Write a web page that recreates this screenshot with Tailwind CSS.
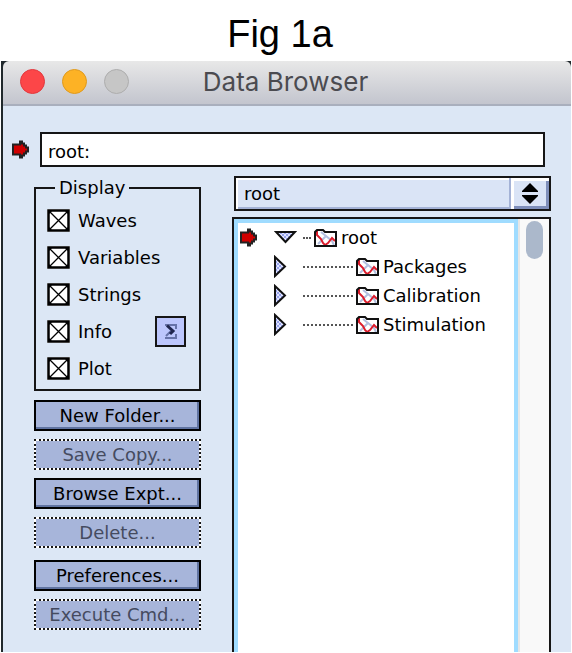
<!DOCTYPE html>
<html lang="en">
<head>
<meta charset="utf-8">
<meta name="viewport" content="width=device-width, initial-scale=1">
<title>Data Browser</title>
<script src="https://cdn.jsdelivr.net/npm/@tailwindcss/browser@4"></script>
</head>
<body class="flex min-h-screen flex-col bg-white pb-px text-black">
<!-- shared symbols -->
<svg class="absolute size-0" aria-hidden="true">
  <defs>
    <pattern id="check" width="4" height="4" patternUnits="userSpaceOnUse">
      <rect width="4" height="4" fill="#dfe4ff"/><rect width="2" height="2" fill="#98a4ee"/><rect x="2" y="2" width="2" height="2" fill="#98a4ee"/>
    </pattern>
    <symbol id="arrow" viewBox="0 0 18 19">
      <path d="M1 4.500h7V1.500h2v2h2v2h2v2h2v4h-2v2h-2v2h-2v2H8v-3H1z" fill="#cf0000" stroke="#222" stroke-width="2"/>
    </symbol>
    <symbol id="folder" viewBox="0 0 24 20">
      <path d="M2 18V4l2-2h6l2 2h11v14z" fill="#fff"/>
      <path d="M8 4l5 4-5 5M13 8l6 5 2 4M9 12l-4 4" fill="none" stroke="#b3bfe0" stroke-width="2"/>
      <path d="M4 3v4l4 4 2 4 2 2 3-2 4-5 3 3" fill="none" stroke="#dc1c2c" stroke-width="2"/>
      <path d="M2 18V4l2-2h6l2 2h11v14z" fill="none" stroke="#111" stroke-width="2"/>
    </symbol>
    <symbol id="cross" viewBox="0 0 23 23">
      <path d="M1.500 1.500h20v20h-20z" fill="none" stroke="#000" stroke-width="2.500"/>
      <path d="M3 3l17 17M20 3L3 20" stroke="#000" stroke-width="1.300"/>
      <path d="M2 2h3L2 5zM21 2v3l-3-3zM2 21v-3l3 3zM21 21h-3l3-3z"/>
    </symbol>
  </defs>
</svg>

<h1 class="h-[61px] pt-3 pr-3 text-center font-['Liberation_Sans',sans-serif] text-[38px] leading-[44px]">Fig 1a</h1>

<main class="mr-px ml-px flex flex-1 flex-col border-l-2 border-[#20282c] bg-[#20282c] font-['DejaVu_Sans',sans-serif] text-lg leading-6">
  <header class="flex h-[45px] items-center rounded-t-md border-b-2 border-[#a9afbd] bg-linear-to-b from-[#e8e8e8] to-[#c3c5ce] pb-0.5 pl-[17px]">
    <div class="flex gap-[17px]">
      <button aria-label="Close" class="size-[25px] rounded-full border border-[#e2383d] bg-[#fc4648]"></button>
      <button aria-label="Minimize" class="size-[25px] rounded-full border border-[#e09a1c] bg-[#fdb225]"></button>
      <button aria-label="Zoom" class="size-[25px] rounded-full border border-[#adadad] bg-[#c6c6c6]"></button>
    </div>
    <h2 class="flex-1 pr-[129px] text-center font-[Inter,sans-serif] text-[26px] leading-8 text-[#4b4b50]">Data Browser</h2>
  </header>

  <div class="flex flex-1 flex-col bg-[#dce7f5] pt-[26px] pr-5 pl-[9px]">
    <div class="flex items-center gap-2.5 pr-1.5">
      <svg class="h-[19px] w-[18px] shrink-0"><use href="#arrow"/></svg>
      <input aria-label="Current data folder" value="root:" class="h-[35px] min-w-0 flex-1 border-2 border-[#161616] bg-white px-1.5 pt-1">
    </div>

    <div class="flex flex-1 gap-[31px] pt-[9px] pl-[22px]">
      <div class="w-[167px] shrink-0">
        <fieldset class="border-2 border-[#161616] px-[11px] pb-2">
          <legend class="ml-2 px-1">Display</legend>
          <div class="flex flex-col gap-3 pt-2">
            <label class="flex h-[25px] items-center gap-2"><span class="grid size-[23px] shrink-0"><input type="checkbox" checked class="peer col-start-1 row-start-1 size-[23px] appearance-none bg-white"><svg class="pointer-events-none col-start-1 row-start-1 size-[23px]"><use href="#cross"/></svg></span>Waves</label>
            <label class="flex h-[25px] items-center gap-2"><span class="grid size-[23px] shrink-0"><input type="checkbox" checked class="peer col-start-1 row-start-1 size-[23px] appearance-none bg-white"><svg class="pointer-events-none col-start-1 row-start-1 size-[23px]"><use href="#cross"/></svg></span>Variables</label>
            <label class="flex h-[25px] items-center gap-2"><span class="grid size-[23px] shrink-0"><input type="checkbox" checked class="peer col-start-1 row-start-1 size-[23px] appearance-none bg-white"><svg class="pointer-events-none col-start-1 row-start-1 size-[23px]"><use href="#cross"/></svg></span>Strings</label>
            <div class="flex h-[25px] items-center justify-between">
              <label class="flex items-center gap-2"><span class="grid size-[23px] shrink-0"><input type="checkbox" checked class="peer col-start-1 row-start-1 size-[23px] appearance-none bg-white"><svg class="pointer-events-none col-start-1 row-start-1 size-[23px]"><use href="#cross"/></svg></span>Info</label>
              <button aria-label="Statistics" class="mr-0.5 flex size-[31px] items-center justify-center border-2 border-[#161616] bg-[#bcc6fc]">
                <svg viewBox="0 0 14 15" class="h-[15px] w-[14px]"><path d="M1 1h11v4M1 14h11v-4M2 12l5-5" fill="none" stroke="#6672a8" stroke-width="2"/><path d="M3 1.500l6 5.500-3 3" fill="none" stroke="#20264e" stroke-width="3"/></svg>
              </button>
            </div>
            <label class="flex h-[25px] items-center gap-2"><span class="grid size-[23px] shrink-0"><input type="checkbox" checked class="peer col-start-1 row-start-1 size-[23px] appearance-none bg-white"><svg class="pointer-events-none col-start-1 row-start-1 size-[23px]"><use href="#cross"/></svg></span>Plot</label>
          </div>
        </fieldset>

        <div class="flex flex-col gap-2 pt-[9px] whitespace-nowrap">
          <button class="h-[31px] border-2 border-black bg-[#a7b5da] shadow-[inset_-2px_-2px_0_#6073a0]">New Folder...</button>
          <button disabled class="h-[31px] border-2 border-dotted border-[#161616] bg-white text-[#454b60] shadow-[inset_0_0_0_20px_#a7b5da]">Save Copy...</button>
          <button class="h-[31px] border-2 border-black bg-[#a7b5da] shadow-[inset_-2px_-2px_0_#6073a0]">Browse Expt...</button>
          <button disabled class="h-[31px] border-2 border-dotted border-[#161616] bg-white text-[#454b60] shadow-[inset_0_0_0_20px_#a7b5da]">Delete...</button>
          <button class="mt-1 h-[31px] border-2 border-black bg-[#a7b5da] shadow-[inset_-2px_-2px_0_#6073a0]">Preferences...</button>
          <button disabled class="h-[31px] border-2 border-dotted border-[#161616] bg-white text-[#454b60] shadow-[inset_0_0_0_20px_#a7b5da]">Execute Cmd...</button>
        </div>
      </div>

      <div class="flex min-w-0 flex-1 flex-col gap-1.5">
        <div class="ml-0.5 grid h-[35px] border-2 border-[#161616] bg-[#dae4f6] shadow-[inset_2px_2px_0_#fff,inset_0_-2px_0_#a4b2d6]">
          <select aria-label="Data folder" class="col-start-1 row-start-1 appearance-none bg-transparent pl-2">
            <option>root</option>
          </select>
          <span class="pointer-events-none col-start-1 row-start-1 flex w-[40px] items-center justify-center justify-self-end border-l-2 border-[#a4b2d6] shadow-[inset_3px_3px_0_#fff,inset_-3px_-3px_0_#7f8fba]">
            <svg viewBox="0 0 16 21" class="h-[21px] w-4"><path d="M8 0l8 8v1H0V8zM0 12h16v1l-8 8-8-8z"/></svg>
          </span>
        </div>

        <div class="flex flex-1 border-2 border-b-0 border-[#161616] bg-white">
          <ul class="flex-1 border-4 border-b-0 border-[#a0dcff] pl-0.5">
            <li class="flex h-[29px] items-center">
              <svg class="h-[19px] w-[18px] shrink-0"><use href="#arrow"/></svg>
              <button aria-label="Collapse root" class="ml-4"><svg viewBox="0 0 23 15" class="block h-[15px] w-[23px]"><path d="M2 2h19l-9.500 10z" fill="url(#check)" stroke="#111" stroke-width="2"/></svg></button>
              <span class="ml-1.5 w-2 border-b-2 border-dotted border-[#555]"></span>
              <svg class="ml-0.5 h-5 w-6 shrink-0"><use href="#folder"/></svg>
              <span class="ml-1">root</span>
            </li>
            <li class="flex h-[29px] items-center pl-[33px]">
              <button aria-label="Expand Packages"><svg viewBox="0 0 14 23" class="block h-[23px] w-3.5"><path d="M2 2v19l10-9.500z" fill="url(#check)" stroke="#111" stroke-width="2"/></svg></button>
              <span class="ml-4 w-[50px] border-b-2 border-dotted border-[#555]"></span>
              <svg class="ml-0.5 h-5 w-6 shrink-0"><use href="#folder"/></svg>
              <span class="ml-1">Packages</span>
            </li>
            <li class="flex h-[29px] items-center pl-[33px]">
              <button aria-label="Expand Calibration"><svg viewBox="0 0 14 23" class="block h-[23px] w-3.5"><path d="M2 2v19l10-9.500z" fill="url(#check)" stroke="#111" stroke-width="2"/></svg></button>
              <span class="ml-4 w-[50px] border-b-2 border-dotted border-[#555]"></span>
              <svg class="ml-0.5 h-5 w-6 shrink-0"><use href="#folder"/></svg>
              <span class="ml-1">Calibration</span>
            </li>
            <li class="flex h-[29px] items-center pl-[33px]">
              <button aria-label="Expand Stimulation"><svg viewBox="0 0 14 23" class="block h-[23px] w-3.5"><path d="M2 2v19l10-9.500z" fill="url(#check)" stroke="#111" stroke-width="2"/></svg></button>
              <span class="ml-4 w-[50px] border-b-2 border-dotted border-[#555]"></span>
              <svg class="ml-0.5 h-5 w-6 shrink-0"><use href="#folder"/></svg>
              <span class="ml-1">Stimulation</span>
            </li>
          </ul>
          <div class="w-[31px] border-l-2 border-[#e6e6e6] bg-[#f9f9f9] pt-0.5 pl-1.5">
            <div class="h-[38px] w-[17px] rounded-full bg-[#abb8cb]"></div>
          </div>
        </div>
      </div>
    </div>
  </div>
</main>
</body>
</html>
